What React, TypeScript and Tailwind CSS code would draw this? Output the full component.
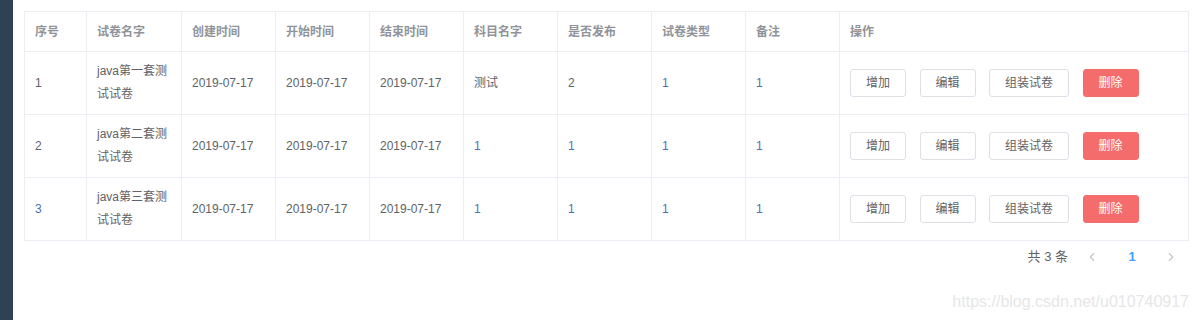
import { ChevronLeft, ChevronRight } from 'lucide-react';

type Row = {
  id: string;
  name: string;
  created: string;
  start: string;
  end: string;
  subject: string;
  published: string;
  type: string;
  remark: string;
  blue: string[];
};

const rows: Row[] = [
  { id: '1', name: 'java第一套测试试卷', created: '2019-07-17', start: '2019-07-17', end: '2019-07-17', subject: '测试', published: '2', type: '1', remark: '1', blue: ['type', 'remark'] },
  { id: '2', name: 'java第二套测试试卷', created: '2019-07-17', start: '2019-07-17', end: '2019-07-17', subject: '1', published: '1', type: '1', remark: '1', blue: ['subject', 'published', 'type', 'remark'] },
  { id: '3', name: 'java第三套测试试卷', created: '2019-07-17', start: '2019-07-17', end: '2019-07-17', subject: '1', published: '1', type: '1', remark: '1', blue: ['id', 'subject', 'published', 'type', 'remark'] },
];

const headers = ['序号', '试卷名字', '创建时间', '开始时间', '结束时间', '科目名字', '是否发布', '试卷类型', '备注', '操作'];
const widths = ['w-[62px]', 'w-[95px]', 'w-[94px]', 'w-[94px]', 'w-[94px]', 'w-[94px]', 'w-[94px]', 'w-[94px]', 'w-[94px]', 'w-auto'];

function Cell({ children, blue }: { children: React.ReactNode; blue?: boolean }) {
  return (
    <td className={`border border-[#ebeef5] px-[10px] py-[8px] align-middle leading-[23px] ${blue ? 'text-[#4a72b5]' : 'text-[#606266]'}`}>
      {children}
    </td>
  );
}

function Btn({ children, danger }: { children: React.ReactNode; danger?: boolean }) {
  return (
    <button
      className={`h-[28px] rounded-[3px] border px-[15px] text-[12px] leading-none ${
        danger ? 'border-[#f56c6c] bg-[#f56c6c] text-white' : 'border-[#dcdfe6] bg-white text-[#606266]'
      }`}
    >
      {children}
    </button>
  );
}

export default function App() {
  return (
    <div
      className="relative flex h-[320px] w-[1200px] overflow-hidden bg-white text-[12px]"
      style={{ fontFamily: '"Liberation Sans", "Noto Sans CJK SC", sans-serif' }}
    >
      <div className="w-[13px] shrink-0 bg-[#304156]" />
      <div className="flex-1 pl-[11px] pr-[11px] pt-[11px]">
        <table className="w-full table-fixed border-collapse border border-[#ebeef5]">
          <colgroup>
            {widths.map((w, i) => (
              <col key={i} className={w} />
            ))}
          </colgroup>
          <thead>
            <tr className="h-[40px]">
              {headers.map((h) => (
                <th key={h} className="border border-[#ebeef5] px-[10px] text-left font-bold text-[#909399]">
                  {h}
                </th>
              ))}
            </tr>
          </thead>
          <tbody>
            {rows.map((r) => (
              <tr key={r.id} className="h-[63px]">
                <Cell blue={r.blue.includes('id')}>{r.id}</Cell>
                <Cell>{r.name}</Cell>
                <Cell>{r.created}</Cell>
                <Cell>{r.start}</Cell>
                <Cell>{r.end}</Cell>
                <Cell blue={r.blue.includes('subject')}>{r.subject}</Cell>
                <Cell blue={r.blue.includes('published')}>{r.published}</Cell>
                <Cell blue={r.blue.includes('type')}>{r.type}</Cell>
                <Cell blue={r.blue.includes('remark')}>{r.remark}</Cell>
                <td className="border border-[#ebeef5] pl-[10px] align-middle">
                  <div className="flex gap-[13.5px]">
                    <Btn>增加</Btn>
                    <Btn>编辑</Btn>
                    <Btn>组装试卷</Btn>
                    <Btn danger>删除</Btn>
                  </div>
                </td>
              </tr>
            ))}
          </tbody>
        </table>
        <div className="mt-[2px] flex h-[28px] items-center justify-end">
          <span className="mr-[6px] text-[13px] text-[#606266]">共 3 条</span>
          <button className="flex h-[28px] w-[36px] items-center justify-center text-[#c0c4cc]">
            <ChevronLeft size={14} strokeWidth={2} />
          </button>
          <span className="ml-[4px] flex h-[28px] w-[36px] items-center justify-center text-[13px] font-bold text-[#409eff]">1</span>
          <button className="ml-[3px] flex h-[28px] w-[36px] items-center justify-center text-[#c0c4cc]">
            <ChevronRight size={14} strokeWidth={2} />
          </button>
        </div>
      </div>
      <div className="absolute right-[11px] top-[290px] text-[16px] text-[#e6e6e6]">https://blog.csdn.net/u010740917</div>
    </div>
  );
}
